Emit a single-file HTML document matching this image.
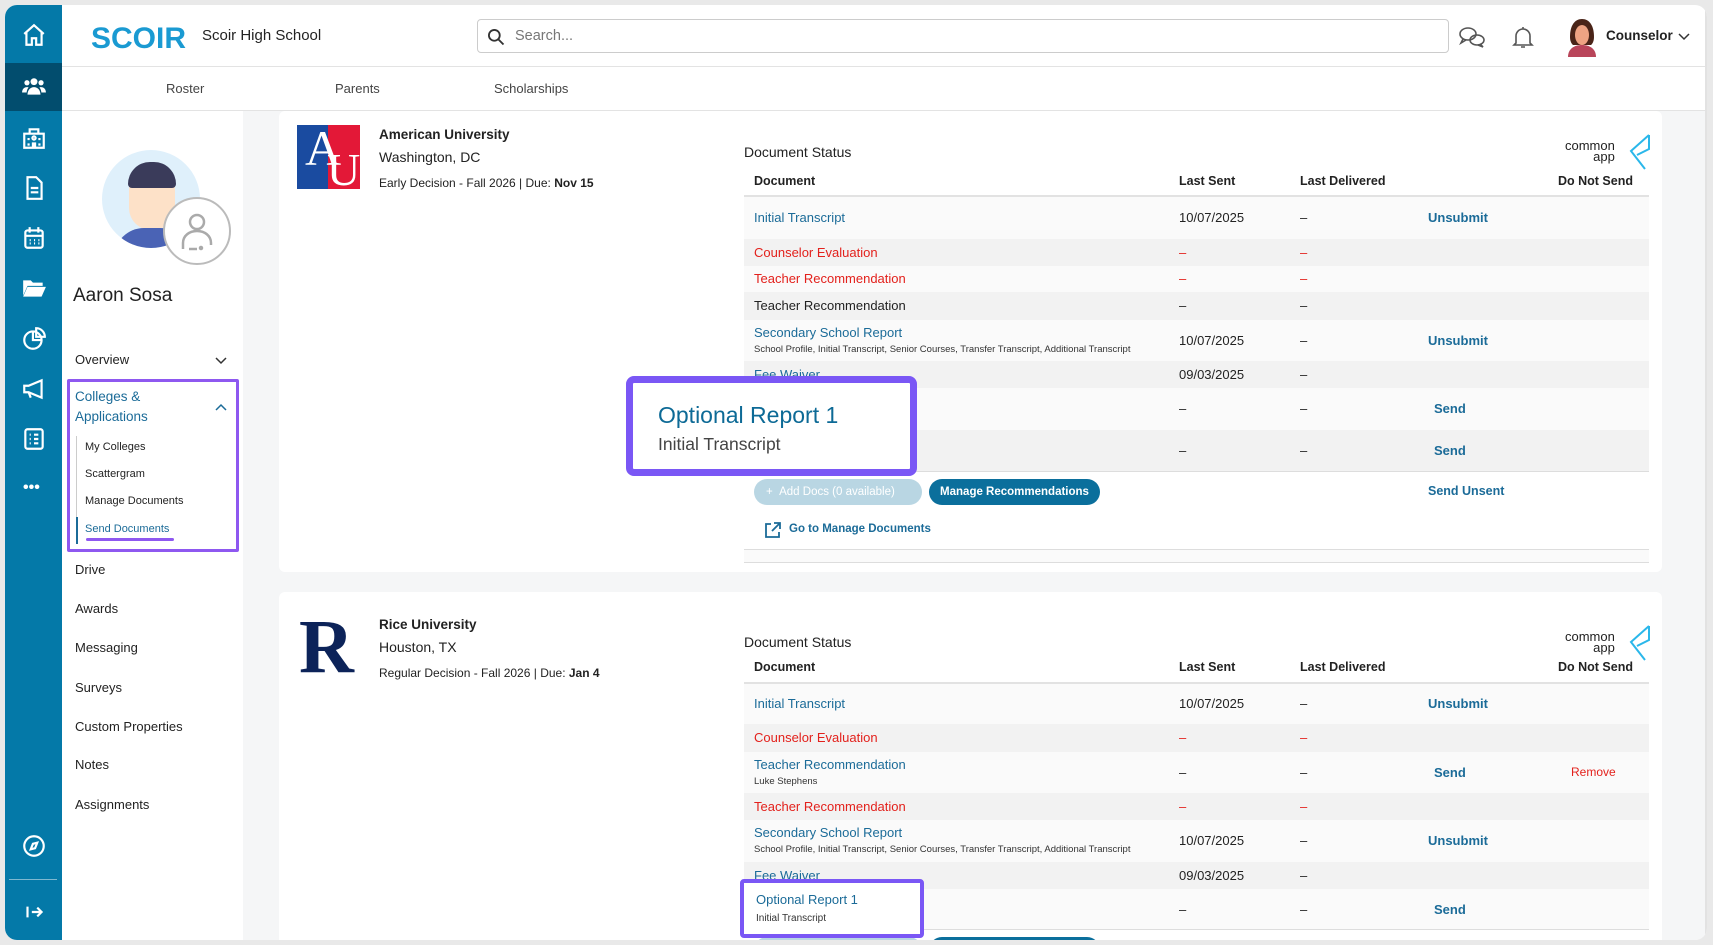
<!DOCTYPE html>
<html><head><meta charset="utf-8"><style>
*{box-sizing:border-box;margin:0;padding:0}
body{width:1713px;height:945px;background:#e9e9e9;font-family:"Liberation Sans",Arial,sans-serif;color:#222;position:relative;overflow:hidden}
.a{position:absolute;white-space:nowrap}
#win{position:absolute;left:5px;top:5px;width:1702px;height:935px;background:#fff;border-radius:12px;overflow:hidden}
#side{position:absolute;left:0;top:0;width:57px;height:935px;background:#0479a8}
.ic{position:absolute;left:16px;width:26px;height:26px}
.bl{color:#1b6b98}.rd{color:#e3211c}
.row{position:absolute;left:0;width:905px}
.tx{font-size:13px}
.sm{font-size:9.5px;color:#333}
.card{position:absolute;background:#fff;border-radius:6px}
.nav{position:absolute;left:70px;font-size:14.5px;color:#222}
</style></head><body>
<div id="win">
<div id="side">
 <div style="position:absolute;left:0;top:58px;width:57px;height:48px;background:#024d6e"></div>
 <svg class="ic" style="top:17px" viewBox="0 0 24 24" fill="none" stroke="#fff" stroke-width="2"><path d="M3 11l9-8 9 8M5 9v12h5v-6h4v6h5V9"/></svg>
 <svg class="ic" style="top:68px" viewBox="0 0 24 24" fill="#fff"><circle cx="12" cy="8" r="3.2"/><circle cx="5.5" cy="9" r="2.4"/><circle cx="18.5" cy="9" r="2.4"/><path d="M6 20c0-4 2.5-7 6-7s6 3 6 7zM1 18c0-3 1.8-5 4.5-5 1 0 1.5.3 1.5.3C5.8 14.8 5.3 16.5 5.2 18zM23 18c0-3-1.8-5-4.5-5-1 0-1.5.3-1.5.3 1.2 1.5 1.7 3.2 1.8 4.7z"/></svg>
 <svg class="ic" style="top:120px" viewBox="0 0 24 24" fill="none" stroke="#fff" stroke-width="2"><path d="M3 8h18v13H3zM8 8V4h8v4M7 12v2M7 17v2M17 12v2M17 17v2M11 17h2v4h-2z"/><circle cx="12" cy="12" r="1.5"/></svg>
 <svg class="ic" style="top:170px" viewBox="0 0 24 24" fill="none" stroke="#fff" stroke-width="2"><path d="M6 2h8l5 5v15H6zM9 12h7M9 16h7"/></svg>
 <svg class="ic" style="top:220px" viewBox="0 0 24 24" fill="none" stroke="#fff" stroke-width="2"><rect x="4" y="5" width="16" height="16" rx="2"/><path d="M8 2v5M16 2v5M4 10h16M8 14h1M12 14h1M16 14h1M8 17h1M12 17h1M16 17h1"/></svg>
 <svg class="ic" style="top:270px" viewBox="0 0 24 24" fill="#fff"><path d="M2 5h7l2 2h9v3H6l-4 9z"/><path d="M6 11h17l-4 9H2z"/></svg>
 <svg class="ic" style="top:321px" viewBox="0 0 24 24" fill="none" stroke="#fff" stroke-width="2"><circle cx="11" cy="13" r="8"/><path d="M11 5v8h8M14 2a8 8 0 0 1 8 8h-8z"/></svg>
 <svg class="ic" style="top:371px" viewBox="0 0 24 24" fill="none" stroke="#fff" stroke-width="2"><path d="M3 9v6h4l12 5V4L7 9zM7 15l2 5"/></svg>
 <svg class="ic" style="top:421px" viewBox="0 0 24 24" fill="none" stroke="#fff" stroke-width="2"><rect x="4" y="3" width="16" height="18" rx="2"/><path d="M8 8h1M12 8h4M8 12h1M12 12h4M8 16h1M12 16h4"/></svg>
 <div class="a" style="left:18px;top:474px;color:#fff;font-size:16px;font-weight:bold;letter-spacing:0px">•••</div>
 <svg class="ic" style="top:828px" viewBox="0 0 24 24" fill="none" stroke="#fff" stroke-width="2"><circle cx="12" cy="12" r="9"/><path d="M15 9l-2 5-4 1 2-5z"/></svg>
 <div style="position:absolute;left:4px;top:874px;width:48px;height:1px;background:#7fb8d0"></div>
 <svg class="ic" style="top:894px" viewBox="0 0 24 24" fill="none" stroke="#fff" stroke-width="2"><path d="M6 7v10M10 12h9M15 8l4 4-4 4"/></svg>
</div>
<!-- header -->
<div class="a" style="left:86px;top:17px;font-size:30px;font-weight:bold;color:#1a9ad2;letter-spacing:0px">SCOIR</div>
<div class="a" style="left:197px;top:22px;font-size:15px">Scoir High School</div>
<div class="a" style="left:472px;top:14px;width:972px;height:34px;border:1px solid #ccc;border-radius:4px"></div>
<svg class="a" style="left:481px;top:22px" width="20" height="20" viewBox="0 0 24 24" fill="none" stroke="#333" stroke-width="2.2"><circle cx="10" cy="10" r="6.5"/><path d="M15 15l6 6"/></svg>
<div class="a" style="left:510px;top:23px;font-size:14.5px;color:#777">Search...</div>
<svg class="a" style="left:1453px;top:20px" width="28" height="26" viewBox="0 0 28 26" fill="none" stroke="#555" stroke-width="1.6"><ellipse cx="10" cy="9" rx="8" ry="6"/><path d="M5 14l-2 4 5-3"/><ellipse cx="19" cy="15" rx="7" ry="5"/><path d="M22 19l3 3-5-2"/></svg>
<svg class="a" style="left:1507px;top:20px" width="22" height="26" viewBox="0 0 22 26" fill="none" stroke="#555" stroke-width="1.6"><path d="M4 18V11a7 7 0 0 1 14 0v7l2 2H2zM9 22h4M11 2v2"/></svg>
<svg class="a" style="left:1559px;top:12px" width="36" height="40" viewBox="0 0 36 40"><path d="M6 20c0-12 5-18 12-18s12 6 12 18c0 6-3 8-3 8H9s-3-2-3-8z" fill="#4a2418"/><ellipse cx="18" cy="18" rx="7" ry="10" fill="#eea383"/><path d="M4 40c0-8 6-12 14-12s14 4 14 12z" fill="#b9455a"/></svg>
<div class="a" style="left:1601px;top:23px;font-size:13.5px;font-weight:bold">Counselor</div>
<svg class="a" style="left:1673px;top:28px" width="12" height="8" viewBox="0 0 12 8" fill="none" stroke="#333" stroke-width="1.5"><path d="M1 1l5 5 5-5"/></svg>
<div class="a" style="left:57px;top:61px;width:1650px;height:1px;background:#e3e3e3"></div>
<div class="a" style="left:161px;top:76px;font-size:13px;color:#444">Roster</div>
<div class="a" style="left:330px;top:76px;font-size:13px;color:#444">Parents</div>
<div class="a" style="left:489px;top:76px;font-size:13px;color:#444">Scholarships</div>
<div class="a" style="left:57px;top:105px;width:1650px;height:1px;background:#e3e3e3"></div>
<!-- content bg -->
<div class="a" style="left:238px;top:106px;width:1464px;height:829px;background:#f5f6f7"></div>
<div class="a" style="left:1700px;top:0;width:2px;height:935px;background:#e2e2e2"></div>
<!-- left panel -->
<div class="a" style="left:97px;top:145px;width:98px;height:98px;border-radius:50%;background:#dff0fb;overflow:hidden">
 <div style="position:absolute;left:27px;top:18px;width:46px;height:62px;border-radius:22px;background:#fde1c8"></div>
 <div style="position:absolute;left:26px;top:12px;width:48px;height:26px;border-radius:22px 22px 4px 4px;background:#3a3b5a"></div>
 <div style="position:absolute;left:12px;top:78px;width:76px;height:40px;border-radius:30px 30px 0 0;background:#4a63b5"></div>
</div>
<div class="a" style="left:158px;top:192px;width:68px;height:68px;border-radius:50%;background:#fff;border:2px solid #bbb"></div>
<svg class="a" style="left:172px;top:204px" width="40" height="44" viewBox="0 0 40 44" fill="none" stroke="#aaa" stroke-width="2.5"><circle cx="20" cy="13" r="7"/><path d="M6 40v-6c0-7 6-12 14-12s14 5 14 12v2M20 40h-8"/><circle cx="24" cy="39" r="1" fill="#aaa"/></svg>
<div class="a" style="left:68px;top:280px;font-size:19px">Aaron Sosa</div>
<div class="nav" style="left:70px;top:347px;font-size:13px">Overview</div>
<svg class="a" style="left:210px;top:352px" width="12" height="8" viewBox="0 0 12 8" fill="none" stroke="#333" stroke-width="1.5"><path d="M1 1l5 5 5-5"/></svg>
<div class="a" style="left:62px;top:374px;width:172px;height:173px;border:3px solid #8e58f0;border-radius:2px"></div>
<div class="a bl" style="left:70px;top:382px;font-size:13.5px;line-height:20px">Colleges &amp;<br>Applications</div>
<svg class="a" style="left:210px;top:398px" width="12" height="8" viewBox="0 0 12 8" fill="none" stroke="#1b6b98" stroke-width="1.5"><path d="M1 7l5-5 5 5"/></svg>
<div class="a" style="left:71px;top:431px;width:1px;height:108px;background:#ccc"></div>
<div class="a" style="left:71px;top:512px;width:2px;height:27px;background:#1b6b98"></div>
<div class="a" style="left:80px;top:436px;font-size:11px">My Colleges</div>
<div class="a" style="left:80px;top:463px;font-size:11px">Scattergram</div>
<div class="a" style="left:80px;top:490px;font-size:11px">Manage Documents</div>
<div class="a bl" style="left:80px;top:518px;font-size:11px">Send Documents</div>
<div class="a" style="left:81px;top:533px;width:88px;height:3px;background:#8e58f0;border-radius:2px"></div>
<div class="nav" style="top:557px;font-size:13px">Drive</div>
<div class="nav" style="top:596px;font-size:13px">Awards</div>
<div class="nav" style="top:635px;font-size:13px">Messaging</div>
<div class="nav" style="top:675px;font-size:13px">Surveys</div>
<div class="nav" style="top:714px;font-size:13px">Custom Properties</div>
<div class="nav" style="top:752px;font-size:13px">Notes</div>
<div class="nav" style="top:792px;font-size:13px">Assignments</div>

<!-- card 1 -->
<div class="card" style="left:274px;top:106px;width:1383px;height:461px"></div>
<div class="a" style="left:292px;top:120px;width:63px;height:64px;background:#1a4ba0;overflow:hidden"><div style="position:absolute;left:31px;top:0;width:32px;height:64px;background:#e31837"></div><div class="a" style="left:8px;top:-6px;font-family:'Liberation Serif',serif;font-size:50px;color:#fff">A</div><div class="a" style="left:30px;top:18px;font-family:'Liberation Serif',serif;font-size:46px;color:#fff">U</div></div>
<div class="a" style="left:374px;top:122px;font-size:13.5px;font-weight:bold">American University</div>
<div class="a" style="left:374px;top:144px;font-size:14px">Washington, DC</div>
<div class="a" style="left:374px;top:171px;font-size:12px">Early Decision - Fall 2026 | Due: <b>Nov 15</b></div>
<div class="a" style="left:739px;top:139px;font-size:14px">Document Status</div>
<div class="a" style="left:1560px;top:135px;font-size:13px;line-height:11px;text-align:right;color:#222">common<br>app</div>
<svg class="a" style="left:1620px;top:128px" width="26" height="38" viewBox="0 0 26 38" fill="none" stroke="#2ab7ea" stroke-width="2"><path d="M24 2L6 18l14 18M24 2v14L12 22"/></svg>
<div class="a" style="left:739px;top:144px;width:905px">
 <div class="a tx" style="left:10px;top:25px;font-weight:bold;font-size:12.5px">Document</div>
 <div class="a tx" style="left:435px;top:25px;font-weight:bold;font-size:12.5px">Last Sent</div>
 <div class="a tx" style="left:556px;top:25px;font-weight:bold;font-size:12.5px">Last Delivered</div>
 <div class="a tx" style="left:814px;top:25px;font-weight:bold;font-size:12.5px">Do Not Send</div>
 <div class="a" style="left:0;top:46px;width:905px;height:2px;background:#e2e2e2"></div>
 <div class="row" style="top:48px;height:42px;background:#fafafa"><div class="a tx bl" style="left:10px;top:13px">Initial Transcript</div><div class="a tx" style="left:435px;top:13px">10/07/2025</div><div class="a tx" style="left:556px;top:13px">–</div><div class="a tx bl" style="left:684px;top:13px;font-weight:bold">Unsubmit</div></div>
 <div class="row" style="top:90px;height:27px;background:#f2f2f2"><div class="a tx rd" style="left:10px;top:6px">Counselor Evaluation</div><div class="a tx rd" style="left:435px;top:6px">–</div><div class="a tx rd" style="left:556px;top:6px">–</div></div>
 <div class="row" style="top:117px;height:26px;background:#fafafa"><div class="a tx rd" style="left:10px;top:5px">Teacher Recommendation</div><div class="a tx rd" style="left:435px;top:5px">–</div><div class="a tx rd" style="left:556px;top:5px">–</div></div>
 <div class="row" style="top:143px;height:28px;background:#f2f2f2"><div class="a tx" style="left:10px;top:6px">Teacher Recommendation</div><div class="a tx" style="left:435px;top:6px">–</div><div class="a tx" style="left:556px;top:6px">–</div></div>
 <div class="row" style="top:171px;height:41px;background:#fafafa"><div class="a tx bl" style="left:10px;top:5px">Secondary School Report</div><div class="a sm" style="left:10px;top:24px">School Profile, Initial Transcript, Senior Courses, Transfer Transcript, Additional Transcript</div><div class="a tx" style="left:435px;top:13px">10/07/2025</div><div class="a tx" style="left:556px;top:13px">–</div><div class="a tx bl" style="left:684px;top:13px;font-weight:bold">Unsubmit</div></div>
 <div class="row" style="top:212px;height:27px;background:#f2f2f2"><div class="a tx bl" style="left:10px;top:6px">Fee Waiver</div><div class="a tx" style="left:435px;top:6px">09/03/2025</div><div class="a tx" style="left:556px;top:6px">–</div></div>
 <div class="row" style="top:239px;height:42px;background:#fafafa"><div class="a tx" style="left:435px;top:13px">–</div><div class="a tx" style="left:556px;top:13px">–</div><div class="a tx bl" style="left:690px;top:13px;font-weight:bold">Send</div></div>
 <div class="row" style="top:281px;height:41px;background:#f2f2f2"><div class="a tx" style="left:435px;top:13px">–</div><div class="a tx" style="left:556px;top:13px">–</div><div class="a tx bl" style="left:690px;top:13px;font-weight:bold">Send</div></div>
 <div class="a" style="left:0;top:322px;width:905px;height:1px;background:#ddd"></div>
 <div class="a" style="left:10px;top:330px;width:168px;height:26px;border-radius:13px;background:#b9d6e3;color:#fff;font-size:11.5px;line-height:26px;padding-left:12px">+&nbsp;&nbsp;Add Docs (0 available)</div>
 <div class="a" style="left:185px;top:330px;width:171px;height:26px;border-radius:13px;background:#0b6f9c;color:#fff;font-size:11.5px;font-weight:bold;line-height:26px;text-align:center">Manage Recommendations</div>
 <div class="a tx bl" style="left:684px;top:335px;font-weight:bold;font-size:12.5px">Send Unsent</div>
 <svg class="a" style="left:20px;top:372px" width="18" height="18" viewBox="0 0 18 18" fill="none" stroke="#1b6b98" stroke-width="1.8"><path d="M7 3H2v13h13v-5M10 2h6v6M16 2L8 10"/></svg>
 <div class="a bl" style="left:45px;top:374px;font-size:11.5px;font-weight:bold">Go to Manage Documents</div>
 <div class="a" style="left:0;top:400px;width:905px;height:1px;background:#ddd"></div>
 <div class="a" style="left:0;top:401px;width:905px;height:13px;background:#fafafa;border-bottom:1px solid #ddd"></div>
</div>
<!-- popup -->
<div class="a" style="left:621px;top:371px;width:291px;height:100px;border:7px solid #7a57f5;border-radius:8px;background:#fff"></div>
<div class="a" style="left:653px;top:397px;font-size:23px;color:#0d6a96">Optional Report 1</div>
<div class="a" style="left:653px;top:429px;font-size:17.5px;color:#444">Initial Transcript</div>

<!-- card 2 -->
<div class="card" style="left:274px;top:587px;width:1383px;height:360px"></div>
<div class="a" style="left:294px;top:604px;font-family:'Liberation Serif',serif;font-size:76px;font-weight:bold;color:#0c2359;line-height:76px">R</div>
<div class="a" style="left:374px;top:612px;font-size:13.5px;font-weight:bold">Rice University</div>
<div class="a" style="left:374px;top:634px;font-size:14px">Houston, TX</div>
<div class="a" style="left:374px;top:661px;font-size:12px">Regular Decision - Fall 2026 | Due: <b>Jan 4</b></div>
<div class="a" style="left:739px;top:629px;font-size:14px">Document Status</div>
<div class="a" style="left:1560px;top:626px;font-size:13px;line-height:11px;text-align:right;color:#222">common<br>app</div>
<svg class="a" style="left:1620px;top:619px" width="26" height="38" viewBox="0 0 26 38" fill="none" stroke="#2ab7ea" stroke-width="2"><path d="M24 2L6 18l14 18M24 2v14L12 22"/></svg>
<div class="a" style="left:739px;top:630px;width:905px">
 <div class="a tx" style="left:10px;top:25px;font-weight:bold;font-size:12.5px">Document</div>
 <div class="a tx" style="left:435px;top:25px;font-weight:bold;font-size:12.5px">Last Sent</div>
 <div class="a tx" style="left:556px;top:25px;font-weight:bold;font-size:12.5px">Last Delivered</div>
 <div class="a tx" style="left:814px;top:25px;font-weight:bold;font-size:12.5px">Do Not Send</div>
 <div class="a" style="left:0;top:47px;width:905px;height:2px;background:#e2e2e2"></div>
 <div class="row" style="top:49px;height:40px;background:#fafafa"><div class="a tx bl" style="left:10px;top:12px">Initial Transcript</div><div class="a tx" style="left:435px;top:12px">10/07/2025</div><div class="a tx" style="left:556px;top:12px">–</div><div class="a tx bl" style="left:684px;top:12px;font-weight:bold">Unsubmit</div></div>
 <div class="row" style="top:89px;height:28px;background:#f2f2f2"><div class="a tx rd" style="left:10px;top:6px">Counselor Evaluation</div><div class="a tx rd" style="left:435px;top:6px">–</div><div class="a tx rd" style="left:556px;top:6px">–</div></div>
 <div class="row" style="top:117px;height:41px;background:#fafafa"><div class="a tx bl" style="left:10px;top:5px">Teacher Recommendation</div><div class="a sm" style="left:10px;top:24px">Luke Stephens</div><div class="a tx" style="left:435px;top:13px">–</div><div class="a tx" style="left:556px;top:13px">–</div><div class="a tx bl" style="left:690px;top:13px;font-weight:bold">Send</div><div class="a tx rd" style="left:827px;top:13px;font-size:12px">Remove</div></div>
 <div class="row" style="top:158px;height:27px;background:#f2f2f2"><div class="a tx rd" style="left:10px;top:6px">Teacher Recommendation</div><div class="a tx rd" style="left:435px;top:6px">–</div><div class="a tx rd" style="left:556px;top:6px">–</div></div>
 <div class="row" style="top:185px;height:42px;background:#fafafa"><div class="a tx bl" style="left:10px;top:5px">Secondary School Report</div><div class="a sm" style="left:10px;top:24px">School Profile, Initial Transcript, Senior Courses, Transfer Transcript, Additional Transcript</div><div class="a tx" style="left:435px;top:13px">10/07/2025</div><div class="a tx" style="left:556px;top:13px">–</div><div class="a tx bl" style="left:684px;top:13px;font-weight:bold">Unsubmit</div></div>
 <div class="row" style="top:227px;height:27px;background:#f2f2f2"><div class="a tx bl" style="left:10px;top:6px">Fee Waiver</div><div class="a tx" style="left:435px;top:6px">09/03/2025</div><div class="a tx" style="left:556px;top:6px">–</div></div>
 <div class="row" style="top:254px;height:40px;background:#fafafa"><div class="a tx" style="left:435px;top:13px">–</div><div class="a tx" style="left:556px;top:13px">–</div><div class="a tx bl" style="left:690px;top:13px;font-weight:bold">Send</div></div>
 <div class="a" style="left:0;top:294px;width:905px;height:1px;background:#ddd"></div>
 <div class="a" style="left:10px;top:302px;width:168px;height:26px;border-radius:13px;background:#b9d6e3"></div>
 <div class="a" style="left:185px;top:302px;width:171px;height:26px;border-radius:13px;background:#0b6f9c"></div>
</div>
<div class="a" style="left:735px;top:874px;width:184px;height:59px;border:4px solid #7a57f5;border-radius:4px;background:#fff"></div>
<div class="a bl" style="left:751px;top:887px;font-size:13px">Optional Report 1</div>
<div class="a sm" style="left:751px;top:908px;font-size:10px">Initial Transcript</div>
</div>
</body></html>
